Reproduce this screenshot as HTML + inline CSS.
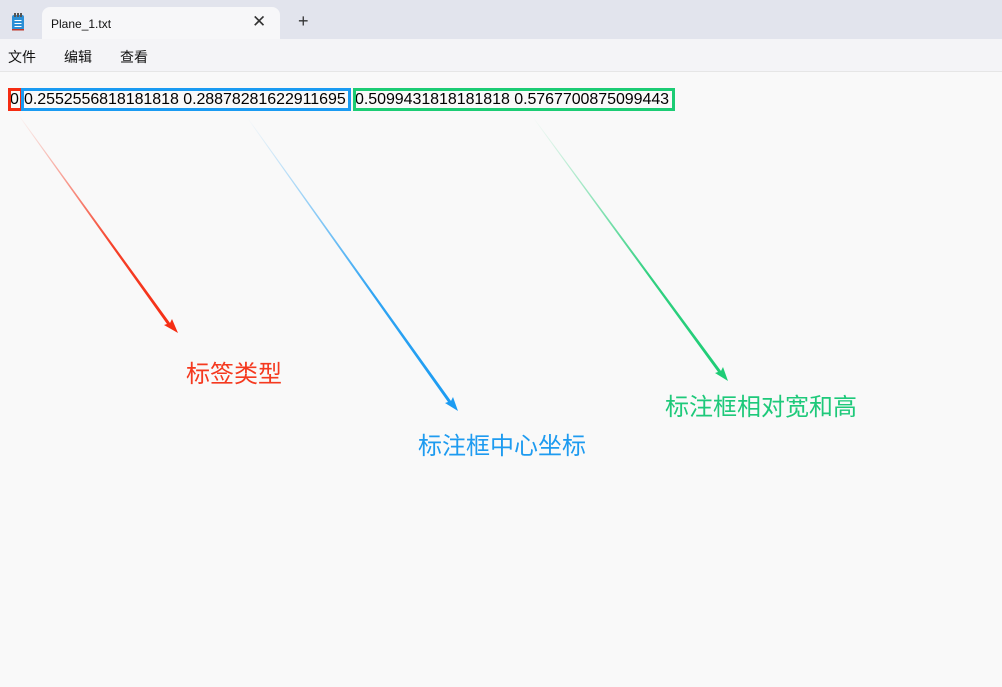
<!DOCTYPE html>
<html><head><meta charset="utf-8"><style>
*{margin:0;padding:0;box-sizing:border-box}
body{width:1002px;height:687px;overflow:hidden;background:#f9f9f9;font-family:"Liberation Sans","Noto Sans CJK SC",sans-serif;position:relative}
.title{position:absolute;left:0;top:0;width:1002px;height:39px;background:#e2e4ed}
.tab{position:absolute;left:42px;top:7px;width:238px;height:33px;background:#f7f7f9;border-radius:8px 8px 0 0;font-size:12px;color:#111}
.menu{position:absolute;left:0;top:39px;width:1002px;height:33px;background:#f4f4f7;border-bottom:1px solid #e6e6e6;font-size:14px;color:#111}
.menu span{position:absolute;top:8px}
.txt{position:absolute;top:91px;font-size:16px;color:#000;white-space:nowrap;letter-spacing:-0.05px}
.box{position:absolute;border:3px solid}
.lab{position:absolute;font-size:24px;white-space:nowrap}
</style></head><body>
<div class="title">
<svg style="position:absolute;left:11px;top:13px" width="14" height="18"><rect x="1" y="2" width="12" height="15" rx="2" fill="#2b8fd6"/><rect x="3" y="0" width="2" height="4" fill="#555"/><rect x="6" y="0" width="2" height="4" fill="#555"/><rect x="9" y="0" width="2" height="4" fill="#555"/><g stroke="#fff" stroke-width="1"><line x1="3.5" y1="7.5" x2="10.5" y2="7.5"/><line x1="3.5" y1="10.5" x2="10.5" y2="10.5"/><line x1="3.5" y1="13.5" x2="10.5" y2="13.5"/></g><rect x="1" y="16" width="12" height="1.5" fill="#c0392b"/></svg>
<div class="tab"><span style="position:absolute;left:9px;top:10px">Plane_1.txt</span><span style="position:absolute;left:210px;top:5px;font-size:17px;color:#333">✕</span></div>
<span style="position:absolute;left:298px;top:11px;font-size:18px;color:#333">+</span>
</div>
<div class="menu"><span style="left:8px">文件</span><span style="left:64px">编辑</span><span style="left:120px">查看</span></div>
<div class="txt" style="left:10px">0</div>
<div class="txt" style="left:24px">0.2552556818181818 0.28878281622911695</div>
<div class="txt" style="left:355px">0.5099431818181818 0.5767700875099443</div>
<div class="box" style="left:8px;top:88px;width:15px;height:23px;border-color:#f52c12"></div>
<div class="box" style="left:21px;top:88px;width:330px;height:23px;border-color:#1a9bf2"></div>
<div class="box" style="left:353px;top:88px;width:322px;height:23px;border-color:#1ccc74"></div>
<svg style="position:absolute;left:0;top:0" width="1002" height="687">
<defs>
<linearGradient id="gr" x1="18" y1="115" x2="178" y2="333" gradientUnits="userSpaceOnUse"><stop offset="0" stop-color="#f52c12" stop-opacity="0"/><stop offset="0.6" stop-color="#f52c12" stop-opacity="0.9"/><stop offset="1" stop-color="#f52c12"/></linearGradient>
<linearGradient id="gb" x1="247" y1="118" x2="458" y2="411" gradientUnits="userSpaceOnUse"><stop offset="0" stop-color="#1a9bf2" stop-opacity="0"/><stop offset="0.6" stop-color="#1a9bf2" stop-opacity="0.9"/><stop offset="1" stop-color="#1a9bf2"/></linearGradient>
<linearGradient id="gg" x1="533" y1="118" x2="728" y2="381" gradientUnits="userSpaceOnUse"><stop offset="0" stop-color="#1ccc74" stop-opacity="0"/><stop offset="0.6" stop-color="#1ccc74" stop-opacity="0.9"/><stop offset="1" stop-color="#1ccc74"/></linearGradient>
</defs>
<polygon points="18,115 19,115 170,323 172,319 178,333 164,325 167,324" fill="url(#gr)"/>
<polygon points="247,118 248,118 451,401 453,397 458,411 445,403 448,402" fill="url(#gb)"/>
<polygon points="533,118 534,118 721,371 723,367 728,381 715,373 718,372" fill="url(#gg)"/>
</svg>
<div class="lab" style="left:186px;top:354px;color:#f5391f">标签类型</div>
<div class="lab" style="left:418px;top:426px;color:#1e9bf0">标注框中心坐标</div>
<div class="lab" style="left:665px;top:387px;color:#1ec97a">标注框相对宽和高</div>
</body></html>
